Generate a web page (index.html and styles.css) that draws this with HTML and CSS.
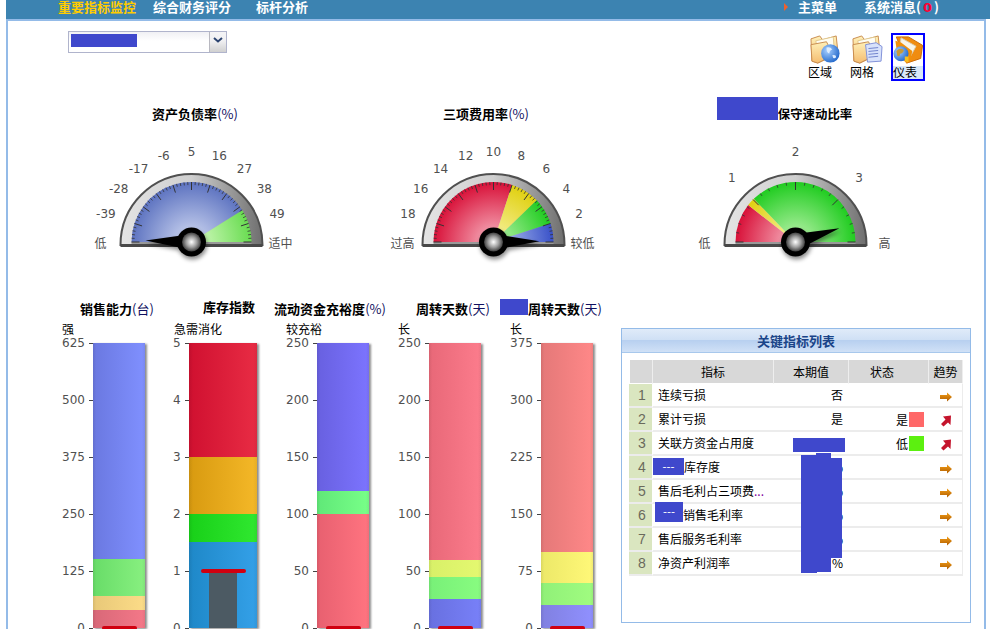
FILE: index.html
```html
<!DOCTYPE html>
<html lang="zh-CN">
<head>
    <meta charset="UTF-8">
    <title>重要指标监控</title>
    <link rel="stylesheet" href="styles.css">
</head>
<body>
    <div class="topbar">
        <div class="nav-item nav-active">重要指标监控</div>
        <div class="nav-item nav-second">综合财务评分</div>
        <div class="nav-item nav-third">标杆分析</div>
        <div class="topbar-right">
            <span class="menu-arrow"></span>
            <span class="nav-item">主菜单</span>
            <span class="nav-item nav-msg">系统消息(<b class="msg-count">0</b>)</span>
        </div>
    </div>

    <div class="main">
        <div class="toolbar">
            <div class="combo">
                <div class="combo-value"><span class="redact combo-redact"></span></div>
                <div class="combo-btn">
                    <svg width="10" height="6" viewBox="0 0 10 6"><path d="M1 1 L5 4.5 L9 1" fill="none" stroke="#2c4470" stroke-width="2"/></svg>
                </div>
            </div>
            <div class="views">
                <div class="view">
                    <svg class="view-icon" viewBox="0 0 32 32"><use href="#folder"/><circle cx="21" cy="20" r="9.5" fill="url(#globe)"/><path d="M17 14 Q21 13 23 16 Q20 17 20 20 Q17 20 17 14 Z M23 22 Q27 21 27 24 Q24 27 23 22 Z" fill="#dcecff"/></svg>
                    <span>区域</span>
                </div>
                <div class="view">
                    <svg class="view-icon" viewBox="0 0 32 32"><use href="#folder"/><path d="M14 11 L25 9 L31 13 L30 28 L16 29 Z" fill="#d8e2fb" stroke="#7f90d8"/><path d="M17 15 L27 14 M17 18 L27 17 M17 21 L27 20 M17 24 L27 23" stroke="#6f82cc"/></svg>
                    <span>网格</span>
                </div>
                <div class="view view-on">
                    <svg class="view-icon" viewBox="0 0 32 32"><path d="M3 2 L16 2 L31 11 L29 25 L14 30 Z" fill="#f08c10" stroke="#c86a08"/><path d="M8 3 L24 12 L18 23 L7 12 Z" fill="#f8f4e8" stroke="#d8ccb0"/><path d="M2 6 L8 8 L20 17 L18 28 L14 30 L4 20 Z" fill="#f0900c"/><circle cx="8" cy="20" r="8" fill="url(#globe)"/><path d="M3 17 Q7 13 11 16 Q10 20 7 20 Q7 24 4 22 Z" fill="#c69a3a"/><path d="M12 23 L16 23 L16 29 L12 28 Z" fill="#f6c020"/></svg>
                    <span>仪表</span>
                </div>
            </div>
        </div>

        <div class="gauges">
            <div class="gauge-col">
                <div class="title gauge-title-1">资产负债率<span class="unit">(%)</span></div>
                <svg class="gauge" id="gauge-1" width="230" height="135"></svg>
            </div>
            <div class="gauge-col">
                <div class="title gauge-title-2">三项费用率<span class="unit">(%)</span></div>
                <svg class="gauge" id="gauge-2" width="230" height="135"></svg>
            </div>
            <div class="gauge-col">
                <div class="title gauge-title-3"><span class="redact title-redact-wide"></span>保守速动比率</div>
                <svg class="gauge" id="gauge-3" width="230" height="135"></svg>
            </div>
        </div>

        <div class="lower">
            <div class="bar-col">
                <div class="title">销售能力<span class="unit">(台)</span></div>
                <div class="caption">强</div>
                <div class="chart">
                    <div class="axis">
                        <div class="tick">625</div><div class="tick">500</div><div class="tick">375</div>
                        <div class="tick">250</div><div class="tick">125</div><div class="tick">0</div>
                    </div>
                    <div class="bar">
                        <div class="seg a-blue" style="height: 216px"></div>
                        <div class="seg a-green" style="height: 37px"></div>
                        <div class="seg a-yellow" style="height: 14px"></div>
                        <div class="seg a-red" style="height: 18px"></div>
                        <div class="marker"></div>
                    </div>
                </div>
            </div>

            <div class="bar-col bar-col-narrow">
                <div class="title title-raised">库存指数</div>
                <div class="caption">急需消化</div>
                <div class="chart">
                    <div class="axis">
                        <div class="tick">5</div><div class="tick">4</div><div class="tick">3</div>
                        <div class="tick">2</div><div class="tick">1</div><div class="tick">0</div>
                    </div>
                    <div class="bar bar-wide">
                        <div class="seg b-red" style="height: 114px"></div>
                        <div class="seg b-orange" style="height: 57px"></div>
                        <div class="seg b-green" style="height: 28px"></div>
                        <div class="seg b-blue" style="height: 86px"></div>
                        <div class="measure" style="height: 57px"></div>
                        <div class="marker marker-wide" style="bottom: 55px"></div>
                    </div>
                </div>
            </div>

            <div class="bar-col">
                <div class="title title-shift">流动资金充裕度<span class="unit">(%)</span></div>
                <div class="caption">较充裕</div>
                <div class="chart">
                    <div class="axis">
                        <div class="tick">250</div><div class="tick">200</div><div class="tick">150</div>
                        <div class="tick">100</div><div class="tick">50</div><div class="tick">0</div>
                    </div>
                    <div class="bar">
                        <div class="seg c-blue" style="height: 148px"></div>
                        <div class="seg c-green" style="height: 23px"></div>
                        <div class="seg c-red" style="height: 114px"></div>
                        <div class="marker"></div>
                    </div>
                </div>
            </div>

            <div class="bar-col">
                <div class="title">周转天数<span class="unit">(天)</span></div>
                <div class="caption">长</div>
                <div class="chart">
                    <div class="axis">
                        <div class="tick">250</div><div class="tick">200</div><div class="tick">150</div>
                        <div class="tick">100</div><div class="tick">50</div><div class="tick">0</div>
                    </div>
                    <div class="bar">
                        <div class="seg d-red" style="height: 217px"></div>
                        <div class="seg d-yellow" style="height: 17px"></div>
                        <div class="seg d-green" style="height: 22px"></div>
                        <div class="seg d-blue" style="height: 29px"></div>
                        <div class="marker"></div>
                    </div>
                </div>
            </div>

            <div class="bar-col">
                <div class="title"><span class="title-wrap"><span class="redact title-redact"></span>周转天数<span class="unit">(天)</span></span></div>
                <div class="caption">长</div>
                <div class="chart">
                    <div class="axis">
                        <div class="tick">375</div><div class="tick">300</div><div class="tick">225</div>
                        <div class="tick">150</div><div class="tick">75</div><div class="tick">0</div>
                    </div>
                    <div class="bar">
                        <div class="seg e-red" style="height: 209px"></div>
                        <div class="seg e-yellow" style="height: 31px"></div>
                        <div class="seg e-green" style="height: 22px"></div>
                        <div class="seg e-blue" style="height: 23px"></div>
                        <div class="marker"></div>
                    </div>
                </div>
            </div>

            <div class="panel">
                <div class="panel-head">关键指标列表</div>
                <table class="kpi">
                    <thead>
                        <tr><th class="col-no"></th><th class="col-name">指标</th><th class="col-val">本期值</th><th class="col-state">状态</th><th class="col-trend">趋势</th></tr>
                    </thead>
                    <tbody>
                        <tr><td class="no">1</td><td class="name">连续亏损</td><td class="val">否</td><td></td><td class="trend"><svg class="arrow"><use href="#arrow-flat"/></svg></td></tr>
                        <tr><td class="no">2</td><td class="name">累计亏损</td><td class="val">是</td><td><div class="state">是<i class="swatch swatch-red"></i></div></td><td class="trend"><svg class="arrow"><use href="#arrow-up"/></svg></td></tr>
                        <tr><td class="no">3</td><td class="name">关联方资金占用度</td><td class="val"></td><td><div class="state">低<i class="swatch swatch-green"></i></div></td><td class="trend"><svg class="arrow"><use href="#arrow-up"/></svg></td></tr>
                        <tr><td class="no">4</td><td class="name name-hidden-4">库存度</td><td class="val">%</td><td></td><td class="trend"><svg class="arrow"><use href="#arrow-flat"/></svg></td></tr>
                        <tr><td class="no">5</td><td class="name">售后毛利占三项费<span class="more">...</span></td><td class="val">%</td><td></td><td class="trend"><svg class="arrow"><use href="#arrow-flat"/></svg></td></tr>
                        <tr><td class="no">6</td><td class="name name-hidden-6">销售毛利率</td><td class="val">%</td><td></td><td class="trend"><svg class="arrow"><use href="#arrow-flat"/></svg></td></tr>
                        <tr><td class="no">7</td><td class="name">售后服务毛利率</td><td class="val">%</td><td></td><td class="trend"><svg class="arrow"><use href="#arrow-flat"/></svg></td></tr>
                        <tr><td class="no">8</td><td class="name">净资产利润率</td><td class="val">%</td><td></td><td class="trend"><svg class="arrow"><use href="#arrow-flat"/></svg></td></tr>
                    </tbody>
                </table>
                <div class="redact cover-row3"></div>
                <div class="redact cover-a"></div>
                <div class="redact cover-b"></div>
                <div class="redact cover-c"></div>
                <div class="redact cover-name4">---</div>
                <div class="redact cover-name6">---</div>
            </div>
        </div>
    </div>

    <!-- shared gradients and symbols -->
    <svg class="defs" width="0" height="0">
        <defs>
            <linearGradient id="rim" x1="0" x2="1" y1="0" y2="0">
                <stop offset="0" stop-color="#e4e4e4"/><stop offset="0.5" stop-color="#cfcfcf"/><stop offset="1" stop-color="#6e6e6e"/>
            </linearGradient>
            <radialGradient id="face-blue" gradientUnits="userSpaceOnUse" cx="114.5" cy="107" r="60">
                <stop offset="0" stop-color="#d4dcf4"/><stop offset="1" stop-color="#5c72c0"/>
            </radialGradient>
            <radialGradient id="face-green" gradientUnits="userSpaceOnUse" cx="114.5" cy="107" r="60">
                <stop offset="0" stop-color="#dcfcc8"/><stop offset="1" stop-color="#68dc50"/>
            </radialGradient>
            <radialGradient id="face-red" gradientUnits="userSpaceOnUse" cx="114.5" cy="107" r="60">
                <stop offset="0" stop-color="#f8b8c4"/><stop offset="1" stop-color="#d81038"/>
            </radialGradient>
            <radialGradient id="face-yellow" gradientUnits="userSpaceOnUse" cx="114.5" cy="107" r="60">
                <stop offset="0" stop-color="#f8f4a8"/><stop offset="1" stop-color="#e0d010"/>
            </radialGradient>
            <radialGradient id="face-lime" gradientUnits="userSpaceOnUse" cx="114.5" cy="107" r="60">
                <stop offset="0" stop-color="#c0f4b0"/><stop offset="1" stop-color="#20cc20"/>
            </radialGradient>
            <radialGradient id="face-deep" gradientUnits="userSpaceOnUse" cx="114.5" cy="107" r="60">
                <stop offset="0" stop-color="#c0d0f4"/><stop offset="1" stop-color="#3850c8"/>
            </radialGradient>
            <radialGradient id="hub">
                <stop offset="0" stop-color="#ffffff"/><stop offset="0.55" stop-color="#a0a0a0"/><stop offset="1" stop-color="#404040"/>
            </radialGradient>
            <filter id="soft" x="-50%" y="-50%" width="200%" height="200%">
                <feDropShadow dx="1" dy="3" stdDeviation="2" flood-color="#000" flood-opacity="0.45"/>
            </filter>
            <radialGradient id="globe" cx="0.35" cy="0.35" r="0.75">
                <stop offset="0" stop-color="#a8d0ff"/><stop offset="1" stop-color="#1a62c8"/>
            </radialGradient>
            <linearGradient id="folder-fill" x1="0" x2="0" y1="0" y2="1">
                <stop offset="0" stop-color="#fff0b8"/><stop offset="1" stop-color="#f4bc70"/>
            </linearGradient>
            <linearGradient id="arrow-orange" x1="0" x2="0" y1="0" y2="1">
                <stop offset="0" stop-color="#f4a018"/><stop offset="1" stop-color="#b05c00"/>
            </linearGradient>
            <symbol id="folder" viewBox="0 0 32 32">
                <path d="M1 5 L10 2 L13 6 L27 2 L29 20 L8 30 L2 28 Z" fill="url(#folder-fill)" stroke="#c88c50"/>
                <path d="M6 7 L24 3 L25 16 L8 20 Z" fill="#fffdf2" stroke="#e0c890"/>
                <path d="M1 11 L17 8 L24 22 L8 30 L2 28 Z" fill="url(#folder-fill)" stroke="#c88c50"/>
            </symbol>
            <symbol id="arrow-flat" viewBox="0 0 14 12">
                <path d="M1 4 H8 V1.5 L13 6 L8 10.5 V8 H1 Z" fill="url(#arrow-orange)"/>
            </symbol>
            <symbol id="arrow-up" viewBox="0 0 14 12">
                <path d="M12 0.5 L11.5 10 L9 7.5 L4.5 11.5 L2 9 L6.5 4.5 L4 1.5 Z" fill="#c4142c"/>
            </symbol>
        </defs>
    </svg>

    <script src="script.js"></script>
</body>
</html>
```

FILE: styles.css
```css
* {
    margin: 0;
    padding: 0;
    box-sizing: border-box;
}

html, body {
    height: 629px;
    overflow: hidden;
    background: #fff;
}

body {
    font-family: "Noto Sans CJK SC", "Liberation Sans", sans-serif;
    font-size: 12px;
    color: #000;
    padding-left: 6px;
}

/* top bar */
.topbar {
    display: flex;
    height: 19px;
    padding: 0 51px 0 52px;
    background: #3c83b1;
    color: #fff;
}

.nav-item {
    font-size: 13px;
    font-weight: bold;
    line-height: 13px;
    white-space: nowrap;
}

.nav-active {
    color: #ffcc00;
}

.nav-second {
    margin-left: 17px;
}

.nav-third {
    margin-left: 25px;
}

.topbar-right {
    display: flex;
    align-items: center;
    margin-left: auto;
    padding-bottom: 5px;
}

.topbar-right .nav-item {
    line-height: 14px;
}

.menu-arrow {
    width: 0;
    height: 0;
    margin-right: 10px;
    border-left: 4px solid #f0602c;
    border-top: 4px solid transparent;
    border-bottom: 4px solid transparent;
}

.nav-msg {
    margin-left: 27px;
}

.msg-count {
    padding: 0 2px;
    color: #ff0033;
    font-family: "DejaVu Sans", sans-serif;
}

/* main frame */
.main {
    height: 610px;
    margin-right: 4px;
    border: 2px solid #94bbe8;
    border-bottom: 0;
}

.redact {
    background: #3f48cc;
}

.toolbar {
    display: flex;
    justify-content: space-between;
    height: 86px;
    padding: 10px 59px 0 60px;
}

.combo {
    display: flex;
    width: 159px;
    height: 22px;
    border: 1px solid #b0b4cc;
    background: linear-gradient(#f0f0f4, #fff 45%);
}

.combo-value {
    flex: 1;
    padding: 2px;
}

.combo-redact {
    display: block;
    width: 66px;
    height: 13px;
}

.combo-btn {
    display: flex;
    justify-content: center;
    padding-top: 5px;
    width: 17px;
    border-left: 1px solid #b8b8c0;
    background: linear-gradient(#f4f4f6, #f0f0f2 45%, #d0d0d0);
}

.views {
    display: flex;
    align-items: flex-start;
    gap: 4px;
    padding-top: 2px;
}

.view {
    display: flex;
    flex-direction: column;
    align-items: flex-start;
    width: 38px;
    height: 48px;
    padding-top: 1px;
    line-height: 14px;
}

.view-icon {
    width: 31px;
    height: 31px;
    margin-left: 2px;
}

.view-on {
    width: 34px;
    margin-left: -1px;
    padding-top: 0;
    border: 2px solid #0000ff;
    background: linear-gradient(#fff 31px, #d8e8f8 31px);
}

.view-on .view-icon {
    margin-left: 0;
}

/* gauges */
.title {
    padding-bottom: 2px;
    font-size: 13px;
    font-weight: bold;
    line-height: 14px;
    text-align: center;
    white-space: nowrap;
}

.unit {
    color: #101060;
    font-weight: normal;
}

.gauges {
    display: flex;
    gap: 72px;
    padding-left: 69px;
}

.gauge-col {
    width: 230px;
}

.gauge-col .title {
    margin-bottom: 12px;
}

.gauge-title-1 {
    padding-left: 6px;
}

.gauge-title-2 {
    padding-right: 16px;
}

.gauge-title-3 {
    position: relative;
    padding-left: 38px;
    font-size: 12.4px;
}

.title-redact-wide {
    position: absolute;
    left: 36px;
    top: -10px;
    width: 61px;
    height: 23px;
}

.gauge {
    display: block;
}

.gauge text {
    font-family: "DejaVu Sans", sans-serif;
    font-size: 12px;
    fill: #505050;
    text-anchor: middle;
    dominant-baseline: central;
}

.gauge .end-label {
    font-family: "Noto Sans CJK SC", sans-serif;
}

.defs {
    position: absolute;
}

/* bullet bars */
.lower {
    display: flex;
    align-items: flex-start;
    margin-top: 32px;
    padding-left: 53px;
}

.bar-col {
    flex: none;
    width: 112px;
}

.title-raised {
    margin-top: -2px;
    padding-bottom: 4px;
}

.title-shift {
    margin-left: -22px;
}

.title-wrap {
    position: relative;
}

.title-redact {
    position: absolute;
    right: 100%;
    top: 0;
    width: 28px;
    height: 16px;
}

.caption {
    height: 16px;
    margin-top: 3px;
    padding-left: 1px;
    line-height: 16px;
}

.chart {
    display: flex;
    height: 285px;
    margin-top: 6px;
    padding-left: 1px;
}

.bar-col-narrow .chart {
    padding-left: 0;
}

.axis {
    display: flex;
    flex-direction: column;
    justify-content: space-between;
    height: 285px;
}

.tick {
    display: flex;
    align-items: center;
    justify-content: flex-end;
    height: 0;
    font-family: "DejaVu Sans", sans-serif;
    font-size: 12px;
    color: #505050;
}

.tick::after {
    content: "";
    width: 4px;
    height: 1px;
    margin-left: 4px;
    background: #444;
}

.bar {
    position: relative;
    width: 52px;
    height: 285px;
    box-shadow: 2px 1px 2px rgba(0, 0, 0, 0.45);
}

.bar-wide {
    width: 68px;
}

.bar::after {
    content: "";
    position: absolute;
    inset: 0;
    background: linear-gradient(to right, rgba(0, 0, 0, 0.08), transparent 6%, transparent 94%, rgba(0, 0, 0, 0.06));
}

.marker {
    position: absolute;
    left: 50%;
    bottom: -2px;
    width: 35px;
    height: 4px;
    margin-left: -17px;
    border-radius: 2px;
    background: #d00010;
    z-index: 2;
}

.marker-wide {
    width: 45px;
    margin-left: -22px;
}

.measure {
    position: absolute;
    left: 20px;
    bottom: 0;
    width: 28px;
    background: #4c5a63;
    z-index: 1;
}

.a-blue { background: linear-gradient(to right, #6a78e0, #8090ff); }
.a-green { background: linear-gradient(to right, #68dc68, #88f080); }
.a-yellow { background: linear-gradient(to right, #e8c878, #fcdc88); }
.a-red { background: linear-gradient(to right, #d86878, #f47888); }
.b-red { background: linear-gradient(to right, #d01030, #e82c44); }
.b-orange { background: linear-gradient(to right, #d89a10, #f4b828); }
.b-green { background: linear-gradient(to right, #18d018, #30e830); }
.b-blue { background: linear-gradient(to right, #1e88c8, #34a0e8); }
.c-blue { background: linear-gradient(to right, #6860e0, #7c74ff); }
.c-green { background: linear-gradient(to right, #60e878, #78ff88); }
.c-red { background: linear-gradient(to right, #e86070, #ff7480); }
.d-red { background: linear-gradient(to right, #e86878, #fc7c8c); }
.d-yellow { background: linear-gradient(to right, #d8f068, #e4f870); }
.d-green { background: linear-gradient(to right, #78f078, #88fc80); }
.d-blue { background: linear-gradient(to right, #6870e0, #7880f8); }
.e-red { background: linear-gradient(to right, #e47878, #ff8888); }
.e-yellow { background: linear-gradient(to right, #ece868, #fff878); }
.e-green { background: linear-gradient(to right, #90f078, #a0fc80); }
.e-blue { background: linear-gradient(to right, #8080e0, #9090ff); }

/* list panel */
.panel {
    position: relative;
    flex: none;
    width: 350px;
    height: 295px;
    margin-top: 26px;
    border: 1px solid #94bbe8;
}

.panel-head {
    height: 24px;
    border-bottom: 1px solid #a8c8ec;
    background: linear-gradient(#e0ebf9, #cfe0f5 48%, #b8d0f0 50%, #d0e1f6);
    color: #1a4488;
    font-size: 13px;
    font-weight: bold;
    line-height: 23px;
    text-align: center;
}

.kpi {
    width: 334px;
    margin: 7px 0 0 7px;
    border-collapse: separate;
    border-spacing: 0;
    table-layout: fixed;
}

.kpi th {
    height: 24px;
    border-right: 1px solid #eee;
    border-bottom: 1px solid #fff;
    background: #d8d8d8;
    font-weight: normal;
    font-size: 12px;
}

.kpi th:first-child {
    border-left: 1px solid #fff;
}

.col-no { width: 24px; }
.col-name { width: 121px; }
.col-val { width: 75px; }
.col-state { width: 80px; padding-right: 13px; }
.col-trend { width: 34px; }

.kpi td {
    height: 24px;
    border-bottom: 2px solid #ececec;
    white-space: nowrap;
    overflow: hidden;
}

.kpi td:last-child {
    border-right: 1px solid #ececec;
}

.kpi .no {
    border-right: 1px solid #fff;
    background: #dae6c0;
    color: #6a6a5c;
    font-family: "Liberation Sans", sans-serif;
    font-size: 14px;
    text-align: center;
    padding-left: 3px;
}

.name {
    padding: 0 0 1px 5px;
}

.name-hidden-4 {
    padding-left: 31px;
}

.name-hidden-6 {
    padding-left: 30px;
}

.more {
    color: #8000a0;
}

.val {
    padding: 0 6px 1px 0;
    text-align: right;
}

.state {
    display: flex;
    align-items: center;
    justify-content: flex-end;
    padding-right: 5px;
}

.swatch {
    width: 15px;
    height: 15px;
    margin-left: 1px;
}

.swatch-red {
    background: #ff6868;
}

.swatch-green {
    background: #5cf010;
}

.trend {
    text-align: center;
}

.arrow {
    display: inline-block;
    width: 14px;
    height: 12px;
    vertical-align: middle;
}

/* blocked-out values over the table */
.cover-row3,
.cover-a,
.cover-b,
.cover-c,
.cover-name4,
.cover-name6 {
    position: absolute;
}

.cover-row3 { left: 171px; top: 109px; width: 52px; height: 14px; }
.cover-a { left: 179px; top: 126px; width: 16px; height: 118px; }
.cover-b { left: 194px; top: 124px; width: 15px; height: 119px; }
.cover-c { left: 209px; top: 129px; width: 11px; height: 100px; }

.cover-name4,
.cover-name6 {
    color: #fff;
    font-family: "DejaVu Sans", sans-serif;
    font-size: 11px;
    line-height: 17px;
    text-align: center;
}

.cover-name4 { left: 31px; top: 129px; width: 31px; height: 17px; }
.cover-name6 { left: 33px; top: 173px; width: 28px; height: 20px; line-height: 20px; }
```

FILE: script.js
```js
// Half-dial gauges: faces, ticks and labels are worked out from the data below
const CX = 114.5;
const CY = 107;

const gauges = [
    {
        id: 'gauge-1',
        labels: ['-39', '-28', '-17', '-6', '5', '16', '27', '38', '49'],
        ends: ['低', '适中'],
        majorStep: 18,
        minorStep: 3.6,
        segments: [[180, 32, 'face-blue'], [32, 0, 'face-green']],
        needle: 178
    },
    {
        id: 'gauge-2',
        labels: ['18', '16', '14', '12', '10', '8', '6', '4', '2'],
        ends: ['过高', '较低'],
        majorStep: 18,
        minorStep: 3.6,
        segments: [[180, 72, 'face-red'], [72, 44, 'face-yellow'], [44, 18, 'face-lime'], [18, 0, 'face-deep']],
        needle: 1
    },
    {
        id: 'gauge-3',
        labels: ['1', '2', '3'],
        ends: ['低', '高'],
        majorStep: 45,
        minorStep: 9,
        segments: [[180, 142, 'face-red'], [142, 134, 'face-yellow'], [134, 0, 'face-lime']],
        needle: 17.5
    }
];

function polar(r, deg) {
    const a = deg * Math.PI / 180;
    return [(CX + r * Math.cos(a)).toFixed(2), (CY - r * Math.sin(a)).toFixed(2)];
}

function drawGauge(g) {
    let html = '';

    // rim
    html += `<path d="M${CX - 71} 110 A71 71 0 0 1 ${CX + 71} 110 Z" fill="url(#rim)" stroke="#505050" stroke-width="2"/>`;
    html += `<rect x="${CX - 60}" y="${CY}" width="120" height="3" fill="#999"/>`;
    html += `<rect x="${CX - 71}" y="109" width="142" height="3" fill="#484848"/>`;

    // coloured face
    g.segments.forEach(([from, to, fill]) => {
        const p1 = polar(60, from);
        const p2 = polar(60, to);
        html += `<path d="M${CX} ${CY} L${p1[0]} ${p1[1]} A60 60 0 0 1 ${p2[0]} ${p2[1]} Z" fill="url(#${fill})"/>`;
    });

    // ticks
    for (let a = 0; a <= 180.01; a += g.minorStep) {
        const isMajor = Math.abs(a / g.majorStep - Math.round(a / g.majorStep)) < 0.001;
        const p1 = polar(60, a);
        const p2 = polar(isMajor ? 52 : 57, a);
        html += `<line x1="${p1[0]}" y1="${p1[1]}" x2="${p2[0]}" y2="${p2[1]}" stroke="#333" stroke-width="${isMajor ? 1 : 0.8}"/>`;
    }

    // labels
    g.labels.forEach((text, i) => {
        const p = polar(90, 180 - (i + 1) * g.majorStep);
        html += `<text x="${p[0]}" y="${p[1]}">${text}</text>`;
    });
    html += `<text class="end-label" x="${CX - 91}" y="${CY}">${g.ends[0]}</text>`;
    html += `<text class="end-label" x="${CX + 89}" y="${CY}">${g.ends[1]}</text>`;

    // needle and hub
    const tip = polar(46, g.needle);
    const b1 = polar(8, g.needle + 90);
    const b2 = polar(8, g.needle - 90);
    html += `<g filter="url(#soft)">`;
    html += `<polygon points="${tip[0]},${tip[1]} ${b1[0]},${b1[1]} ${b2[0]},${b2[1]}" fill="#000"/>`;
    html += `<circle cx="${CX}" cy="${CY}" r="14.5" fill="#050505"/>`;
    html += `</g>`;
    html += `<circle cx="${CX}" cy="${CY}" r="9.5" fill="url(#hub)"/>`;

    document.getElementById(g.id).innerHTML = html;
}

gauges.forEach(drawGauge);
```
